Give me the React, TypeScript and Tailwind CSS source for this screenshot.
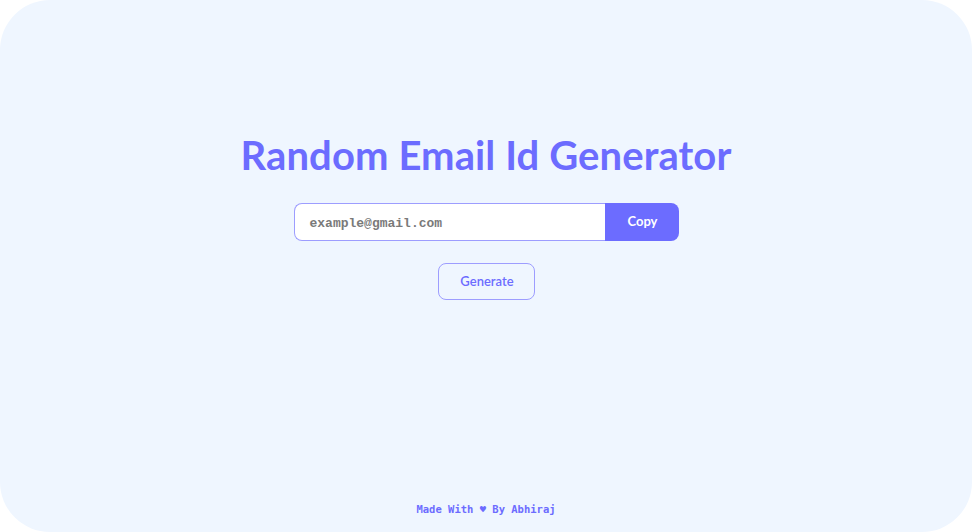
export default function App() {
  return (
    <div className="h-[532px] w-[972px] bg-white">
      <div className="flex h-full w-full flex-col items-center rounded-[50px] bg-[#eff6ff] font-['Lato',sans-serif]">
        <main className="flex flex-1 flex-col items-center pt-[133px]">
          <h1 className="text-[40px] font-bold leading-[44px] tracking-[0.1px] text-[#6c6cff]">
            Random Email Id Generator
          </h1>
          <div className="ml-[2px] mt-[26px] flex h-[38px] w-[385px]">
            <input
              readOnly
              placeholder="example@gmail.com"
              className="h-full flex-1 rounded-l-[8px] border border-r-0 border-[#9d9dff] bg-white px-[14px] pt-[3px] font-['Liberation_Mono',monospace] text-[13px] font-bold text-[#7a7a7a] outline-none placeholder:text-[#7a7a7a]"
            />
            <button className="h-full w-[74px] rounded-r-[8px] bg-[#6c6cff] text-[13px] font-bold text-white">
              Copy
            </button>
          </div>
          <button className="ml-[2px] mt-[22px] h-[37px] w-[97px] rounded-[8px] border border-[#9d9dff] text-[13px] font-semibold text-[#6c6cff]">
            Generate
          </button>
        </main>
        <footer className="pb-[14px] font-['DejaVu_Sans_Mono',monospace] text-[10.5px] font-bold text-[#6c6cff]">
          Made With ♥ By Abhiraj
        </footer>
      </div>
    </div>
  )
}
